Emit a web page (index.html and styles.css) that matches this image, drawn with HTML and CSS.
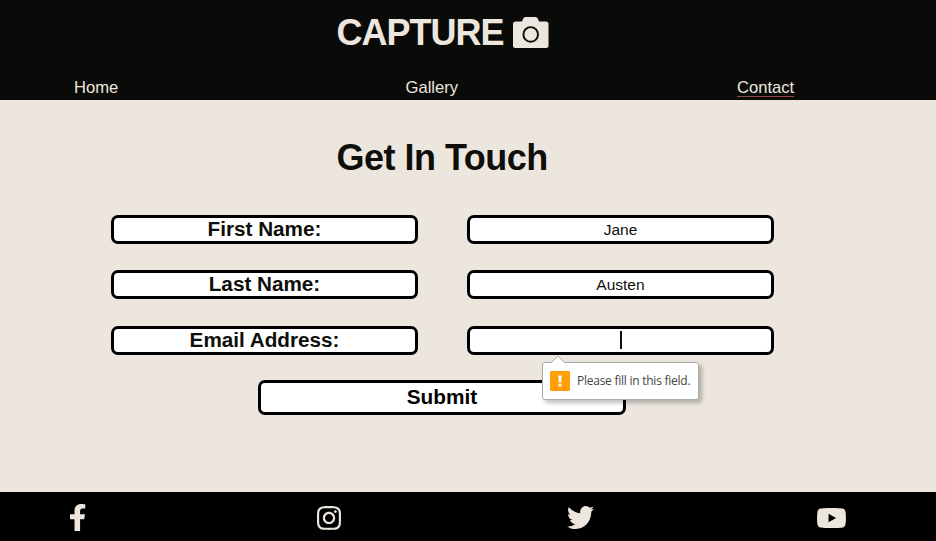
FILE: index.html
```html
<!DOCTYPE html>
<html lang="en">
<head>
<meta charset="utf-8">
<title>Capture - Contact</title>
<link rel="stylesheet" href="styles.css">
</head>
<body>
<header class="header">
  <div class="brand">
    <h1 class="logo">CAPTURE</h1>
    <svg class="camera" viewBox="0 0 36 31"><path fill="#ede6df" d="M3 4.500h6l1.200-3Q10.800 0 12.500 0h10q1.700 0 2.300 1.500l1.200 3h7q2.500 0 2.500 2.500V28.500q0 2.500-2.500 2.500H2.500Q0 31 0 28.500V7q0-2.500 3-2.500z"/><circle cx="17.700" cy="17.400" r="7.300" fill="none" stroke="#0a0a08" stroke-width="1.900"/></svg>
  </div>
  <nav class="nav">
    <a class="nav-link">Home</a>
    <a class="nav-link">Gallery</a>
    <a class="nav-link active">Contact</a>
  </nav>
</header>
<main class="main">
  <h2 class="title">Get In Touch</h2>
  <form class="form">
    <div class="label">First Name:</div>
    <div class="field">Jane</div>
    <div class="label">Last Name:</div>
    <div class="field">Austen</div>
    <div class="label">Email Address:</div>
    <div class="field focus"><i class="caret"></i>
      <div class="tip">
        <svg class="tip-arrow" viewBox="0 0 14 8"><path d="M0 8 7 1l7 7" fill="#fff" stroke="#aaa"/></svg>
        <svg class="tip-icon" viewBox="0 0 20 20"><rect width="20" height="20" rx="1.500" fill="#ff9f05"/><path fill="#fff" d="M8.300 4.500h3.400l-.5 7H8.800zM8.500 12.800h3v2.800h-3z"/></svg>
        <span class="tip-text">Please fill in this field.</span>
      </div>
    </div>
  </form>
  <div class="submit">Submit</div>
</main>
<footer class="footer">
  <svg class="icon facebook" viewBox="22.890 0 270.500 512" preserveAspectRatio="none"><path d="M279.140 288l14.220-92.660h-88.910v-60.130c0-25.350 12.420-50.060 52.240-50.060h40.420V6.260S260.430 0 225.360 0c-73.220 0-121.080 44.380-121.080 124.720v70.620H22.890V288h81.390v224h100.170V288z"/></svg>
  <svg class="icon instagram" viewBox="0 31 448 450" preserveAspectRatio="none"><path d="M224.100 141c-63.600 0-114.900 51.300-114.900 114.900s51.300 114.900 114.900 114.900S339 319.500 339 255.900 287.700 141 224.100 141zm0 189.600c-41.100 0-74.700-33.500-74.700-74.700s33.500-74.700 74.700-74.700 74.700 33.500 74.700 74.700-33.600 74.700-74.700 74.700zm146.400-194.300c0 14.900-12 26.800-26.800 26.800-14.900 0-26.800-12-26.800-26.800s12-26.800 26.800-26.800 26.800 12 26.800 26.800zm76.100 27.200c-1.700-35.900-9.900-67.700-36.200-93.900-26.200-26.200-58-34.400-93.900-36.200-37-2.100-147.900-2.100-184.900 0-35.800 1.700-67.600 9.900-93.900 36.100s-34.400 58-36.200 93.900c-2.100 37-2.100 147.900 0 184.900 1.700 35.900 9.900 67.700 36.200 93.900s58 34.400 93.900 36.200c37 2.100 147.900 2.100 184.900 0 35.900-1.700 67.700-9.900 93.900-36.200 26.200-26.200 34.400-58 36.200-93.900 2.100-37 2.100-147.800 0-184.800zM398.800 388c-7.800 19.600-22.900 34.700-42.600 42.600-29.500 11.700-99.500 9-132.100 9s-102.700 2.600-132.100-9c-19.600-7.800-34.700-22.900-42.600-42.600-11.700-29.500-9-99.500-9-132.100s-2.600-102.700 9-132.100c7.800-19.600 22.900-34.700 42.600-42.600 29.500-11.700 99.500-9 132.100-9s102.700-2.600 132.100 9c19.600 7.800 34.700 22.900 42.600 42.600 11.700 29.500 9 99.500 9 132.100s2.700 102.700-9 132.100z"/></svg>
  <svg class="icon twitter" viewBox="0 48 512 416" preserveAspectRatio="none"><path d="M459.370 151.716c.325 4.548.325 9.097.325 13.645 0 138.720-105.583 298.558-298.558 298.558-59.452 0-114.680-17.219-161.137-47.106 8.447.974 16.568 1.299 25.340 1.299 49.055 0 94.213-16.568 130.274-44.832-46.132-.975-84.792-31.188-98.112-72.772 6.498.974 12.995 1.624 19.818 1.624 9.421 0 18.843-1.300 27.614-3.573-48.081-9.747-84.143-51.980-84.143-102.985v-1.299c13.969 7.797 30.214 12.670 47.431 13.319-28.264-18.843-46.781-51.005-46.781-87.391 0-19.492 5.197-37.360 14.294-52.954 51.655 63.675 129.300 105.258 216.365 109.807-1.624-7.797-2.599-15.918-2.599-24.040 0-57.828 46.782-104.934 104.934-104.934 30.213 0 57.502 12.670 76.670 33.137 23.715-4.548 46.456-13.320 66.599-25.340-7.798 24.366-24.366 44.833-46.132 57.827 21.117-2.273 41.584-8.122 60.426-16.243-14.292 20.791-32.161 39.308-52.628 54.253z"/></svg>
  <svg class="icon youtube" viewBox="14 64 548 384" preserveAspectRatio="none"><path d="M549.655 124.083c-6.281-23.650-24.787-42.276-48.284-48.597C458.781 64 288 64 288 64S117.220 64 74.629 75.486c-23.497 6.322-42.003 24.947-48.284 48.597-11.412 42.867-11.412 132.305-11.412 132.305s0 89.438 11.412 132.305c6.281 23.650 24.787 41.500 48.284 47.821C117.220 448 288 448 288 448s170.780 0 213.371-11.486c23.497-6.321 42.003-24.171 48.284-47.821 11.412-42.867 11.412-132.305 11.412-132.305s0-89.438-11.412-132.305zm-317.510 213.508V175.185l142.739 81.205-142.739 81.201z"/></svg>
</footer>
</body>
</html>
```
FILE: styles.css
```css
* { box-sizing: border-box; }
body {
  margin: 0;
  height: 541px;
  display: flex;
  flex-direction: column;
  overflow: hidden;
  background: #ede6df;
  color: #0e0f0b;
  font-family: "Liberation Sans", Arial, sans-serif;
}
.header {
  height: 100px;
  background: #0a0a08;
  color: #ede6df;
}
.brand {
  display: flex;
  height: 66px;
  padding-left: 336.500px;
}
.logo {
  margin: 12px 0 0;
  width: 176.500px;
  font-size: 36px;
  line-height: 42px;
  letter-spacing: -1px;
}
.camera { width: 36px; height: 31px; margin-top: 17px; }
.nav {
  display: grid;
  grid-template-columns: 331.500px 331.500px auto;
  justify-items: start;
  padding: 11px 0 0 74px;
}
.nav-link {
  font-size: 16.600px;
  line-height: 21px;
  height: 20px;
}
.active { border-bottom: 1px solid #8a4546; }
.main {
  flex: 1;
  padding-top: 37px;
  background: #ede6df;
}
.title {
  margin: 0 0 36px 336.500px;
  font-size: 36px;
  line-height: 42px;
  letter-spacing: -0.500px;
  white-space: nowrap;
}
.form {
  display: grid;
  grid-template-columns: 307px 307px;
  grid-auto-rows: 29px;
  gap: 26.400px 49px;
  padding-left: 111px;
}
.label, .field, .submit {
  display: flex;
  align-items: center;
  justify-content: center;
  background: #fff;
  border: 3px solid #000;
  border-radius: 7px;
}
.label {
  padding-bottom: 1px;
  font-size: 20.700px;
  font-weight: bold;
}
.field { font-size: 15.500px; position: relative; }
.caret { width: 2px; height: 18px; background: #111; }
.submit {
  width: 368px;
  height: 35px;
  margin: 25.200px 0 0 258px;
  font-size: 20.800px;
  font-weight: bold;
  color: #000;
}
.tip {
  position: absolute;
  z-index: 2;
  left: 72px;
  top: 33px;
  width: 157px;
  height: 38px;
  display: flex;
  align-items: center;
  padding-left: 7px;
  gap: 7px;
  background: #fff;
  border: 1px solid #aaa;
  border-radius: 3px;
  box-shadow: 3px 3px 4px rgba(0, 0, 0, 0.25);
}
.tip-arrow { position: absolute; left: 8px; top: -8px; width: 14px; height: 8px; }
.tip-icon { width: 20px; height: 20px; flex: none; }
.tip-text {
  font: 12px/18px "Open Sans", "Noto Sans", sans-serif;
  color: #444;
  white-space: nowrap;
  letter-spacing: -0.250px;
}
.footer {
  height: 49px;
  display: flex;
  align-items: center;
  padding: 2px 0 0 70px;
  background: #000;
}
.icon { fill: #ede6df; flex: none; overflow: visible; }
.facebook { width: 15px; height: 27px; margin-right: 232px; }
.instagram { width: 24px; height: 24px; margin-right: 226px; }
.twitter { width: 27px; height: 23px; margin-right: 223px; }
.youtube { width: 29px; height: 20px; }
```
